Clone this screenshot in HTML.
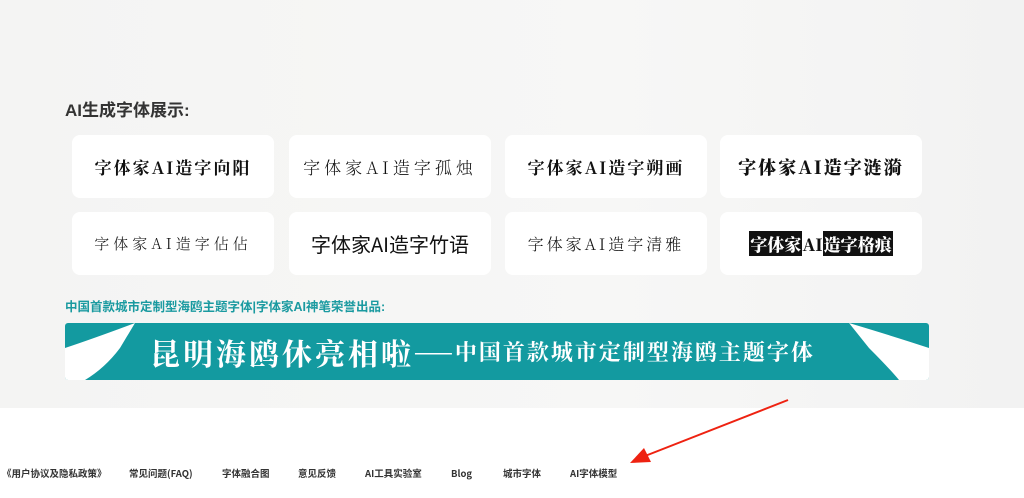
<!DOCTYPE html>
<html><head><meta charset="utf-8"><style>
*{margin:0;padding:0;box-sizing:border-box}
body{width:1024px;height:498px;overflow:hidden;background:#fff;font-family:"Liberation Sans","Noto Sans CJK SC",sans-serif;position:relative}
.bg{position:absolute;left:0;top:0;width:1024px;height:408px;background:linear-gradient(90deg,#f4f4f3,#f7f7f6 60%,#f2f2f2)}
h2{position:absolute;left:65px;top:96px;font-size:17px;font-weight:bold;color:#333}
.card{position:absolute;width:202px;height:63px;background:#fff;border-radius:8px;display:flex;align-items:center;justify-content:center;font-size:17px;color:#111;font-family:"Noto Serif CJK SC","Liberation Serif",serif;letter-spacing:2px}
.sub{position:absolute;left:65px;top:296px;font-size:12.5px;font-weight:bold;color:#1a9aa0}
.banner{position:absolute;left:65px;top:323px;width:864px;height:57px;background:#139aa0;border-radius:3px;overflow:hidden;color:#fff;font-family:"Noto Serif CJK SC",serif;display:flex;align-items:center}
.foot{position:absolute;top:466px;height:14px;line-height:14px;font-size:9.5px;font-weight:bold;color:#333;font-family:"Noto Sans CJK SC",sans-serif}
</style></head><body>
<div class="bg"></div>
<h2>AI生成字体展示:</h2>
<div class="card" style="left:72px;top:135px;font-weight:bold">字体家AI造字向阳</div>
<div class="card" style="left:289px;top:135px;font-weight:300;letter-spacing:4px">字体家AI造字孤烛</div>
<div class="card" style="left:505px;top:135px;font-weight:bold">字体家AI造字朔画</div>
<div class="card" style="left:720px;top:135px;font-weight:900;font-size:18px">字体家AI造字涟漪</div>
<div class="card" style="left:72px;top:212px;font-weight:300;letter-spacing:4px;font-size:15px">字体家AI造字佔佔</div>
<div class="card" style="left:289px;top:212px;font-family:'Noto Sans CJK SC',sans-serif;font-size:20px;letter-spacing:0">字体家AI造字竹语</div>
<div class="card" style="left:505px;top:212px;font-weight:300;letter-spacing:3px;font-size:16px">字体家AI造字清雅</div>
<div class="card" style="left:720px;top:212px;font-weight:900;font-size:17px;letter-spacing:0"><span style="background:#111;color:#fff;padding:0 1px">字体家</span>AI<span style="background:#111;color:#fff;padding:0 1px">造字格痕</span></div>
<div class="sub">中国首款城市定制型海鸥主题字体|字体家AI神笔荣誉出品:</div>
<div class="banner">
<svg style="position:absolute;left:0;top:0" width="80" height="57"><path d="M0 25 Q30 15 70 0 L55 25 Q40 45 20 57 L0 57Z" fill="#fff"/></svg>
<svg style="position:absolute;right:0;top:0" width="90" height="57"><path d="M90 25 Q60 15 10 0 L30 25 Q50 45 60 57 L90 57Z" fill="#fff"/></svg>
<span style="position:relative;margin-left:85px;font-size:30px;font-weight:bold;letter-spacing:3px">昆明海鸥休亮相啦</span><span style="position:relative;font-size:22px;font-weight:bold;letter-spacing:2px">——中国首款城市定制型海鸥主题字体</span>
</div>
<svg style="position:absolute;left:0;top:0" width="1024" height="498"><line x1="788" y1="400" x2="645" y2="456" stroke="#e21" stroke-width="2"/><path d="M630 463 L644 448 L651 462Z" fill="#e21"/></svg>
<span class="foot" style="left:2px">《用户协议及隐私政策》</span>
<span class="foot" style="left:129px">常见问题(FAQ)</span>
<span class="foot" style="left:222px">字体融合图</span>
<span class="foot" style="left:298px">意见反馈</span>
<span class="foot" style="left:365px">AI工具实验室</span>
<span class="foot" style="left:451px">Blog</span>
<span class="foot" style="left:503px">城市字体</span>
<span class="foot" style="left:570px">AI字体模型</span>
</body></html>
